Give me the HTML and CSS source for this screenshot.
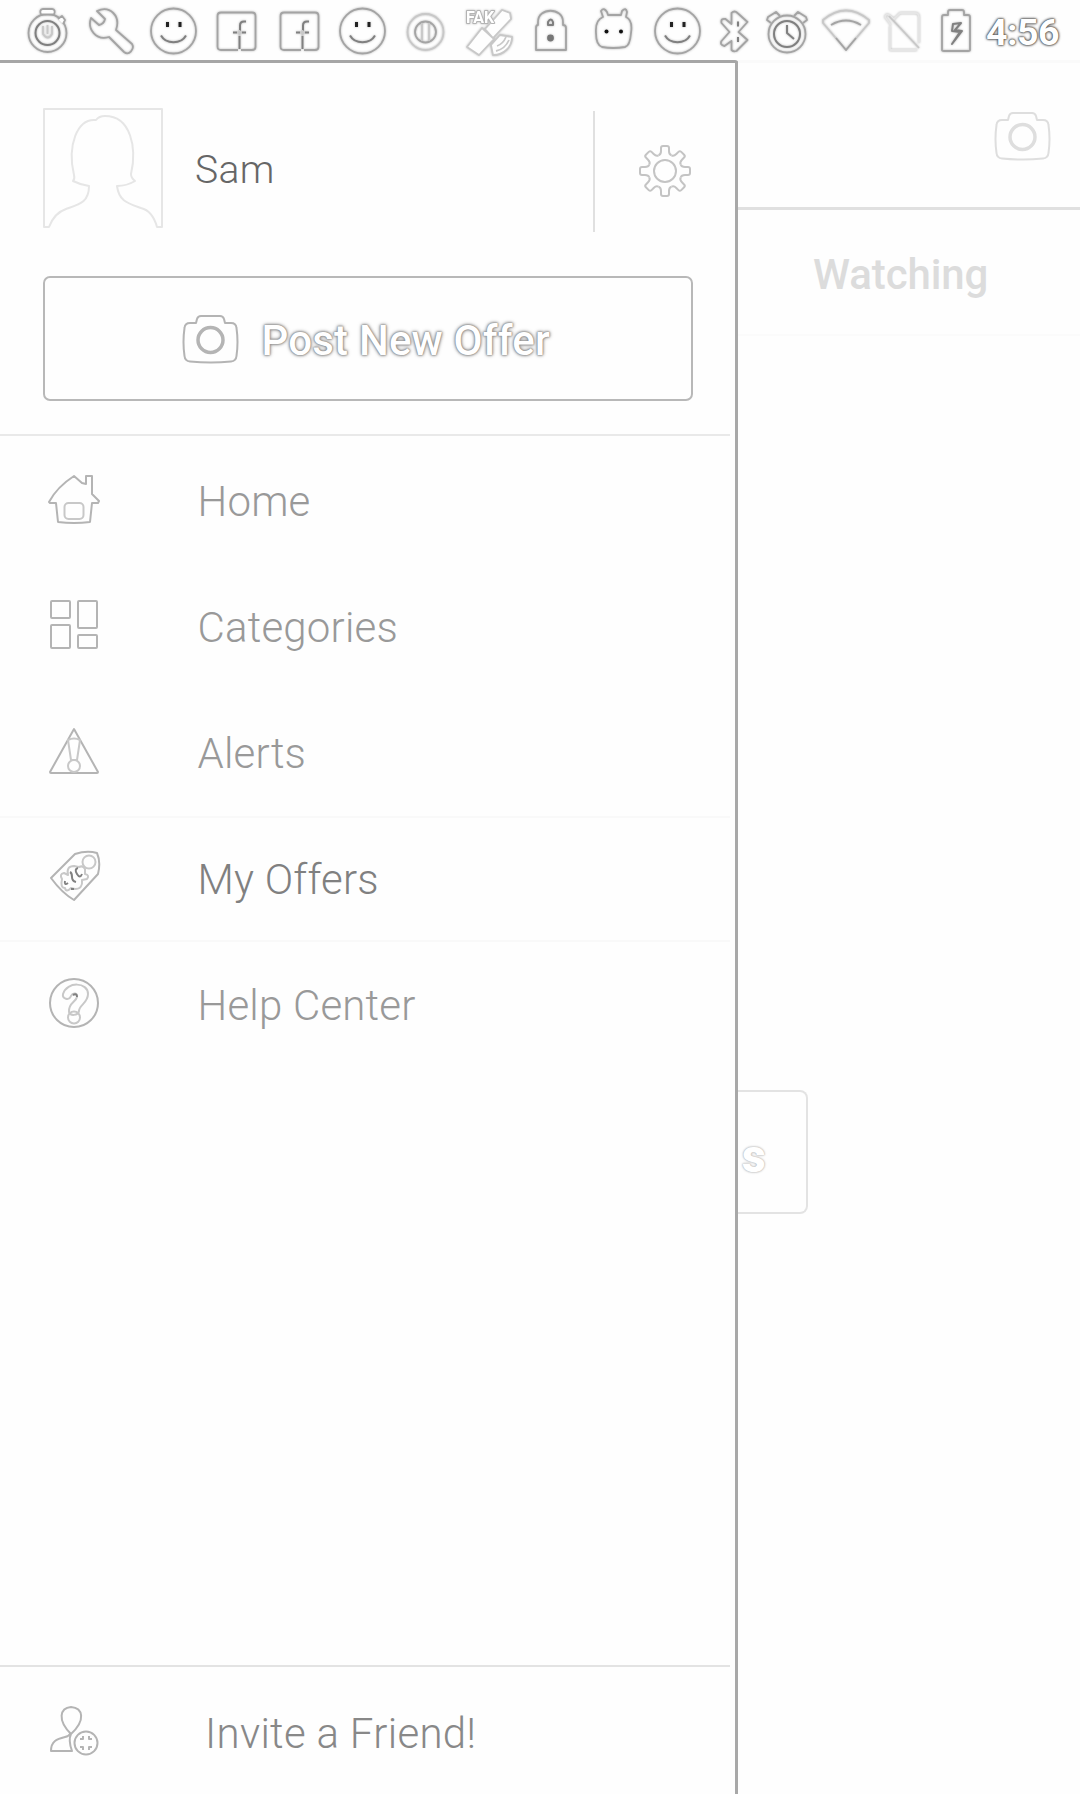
FILE: index.html
```html
<!DOCTYPE html>
<html lang="en">
<head>
<meta charset="utf-8">
<title>Offers</title>
<link rel="stylesheet" href="styles.css">
</head>
<body>
<svg class="defs" width="0" height="0">
  <symbol id="smile" viewBox="0 0 63 60">
    <circle cx="31.500" cy="31" r="22.500"/>
    <path class="dark" d="M25.500 22v5M38 22v5"/>
    <path class="mid" d="M19 35.500c5 9 20 9 25 0"/>
  </symbol>
  <symbol id="fb" viewBox="0 0 63 60">
    <path d="M33 50H16q-3.500 0-3.500-3.500V16q0-3.500 3.500-3.500h31q3.500 0 3.500 3.500v31q0 3-3.500 3H36"/>
    <path class="mid" d="M41 21.500h-2q-4 0-4 4V31M28 32.500h4M37 32.500h4M34.500 36v13"/>
    <path class="soft" d="M32 32.500h5M34.500 30v6"/>
  </symbol>
  <symbol id="camera" viewBox="0 0 57 50">
    <path d="M14 9l1-4q1-3 4-3h19q3 0 4 3l1 4h6q5 0 5.500 5 2 14 0 28-.5 5-5.500 5.500-20 2-41 0Q3 47 2.500 42q-2-14 0-28Q3 9 8 9z"/>
    <circle class="lens" cx="28.500" cy="26" r="12.500"/>
  </symbol>
  <symbol id="tooth" viewBox="-27 -27 54 54">
    <path d="M-6.500-15.700Q-4-16.500-4-20V-23q0-2 2-2h4q2 0 2 2v3q0 3.500 2.500 4.300"/>
  </symbol>
</svg>
<div class="screen">
  <header class="status">
    <svg class="cell" viewBox="0 0 63 60"><circle cx="31.500" cy="33" r="19"/><circle class="mid" cx="31.500" cy="33" r="12"/><path class="lid" d="M25 14.500q-2-5 2-5.500h9q4 .5 2 5.500zM42 19l4-3 3 4-2 4"/><path class="soft" d="M27 26v8q5 7 9 0v-8M31.500 25v9"/></svg>
    <svg class="cell" viewBox="0 0 63 60"><path d="M18 11l8 8q-1 5-6 6l-8-7c-4 11 5 23 18 19l15 15c5 4 11-3 8-8L37 30C42 16 31 5 18 11z"/></svg>
    <svg class="cell"><use href="#smile"/></svg>
    <svg class="cell"><use href="#fb"/></svg>
    <svg class="cell"><use href="#fb"/></svg>
    <svg class="cell"><use href="#smile"/></svg>
    <svg class="cell" viewBox="0 0 63 60"><circle class="soft" cx="31.500" cy="32" r="18"/><circle cx="31.500" cy="32" r="10.500"/><path class="soft" d="M28 23v18M35 23v18"/></svg>
    <svg class="cell" viewBox="0 0 63 60"><path class="paper" d="M38 18l7-8 8 3 1 6-18 19-8-9zM25 28l12 11-15 16-12-8zM43 35l12 2c0 10-8 18-19 18l-2-10z"/><path class="soft" d="M40 46q6-2 9-9M39 51q9-2 13-11"/><text class="tiny" x="9" y="23">FAK</text></svg>
    <svg class="cell" viewBox="0 0 63 60"><path d="M18 25v-3c0-15 25-15 25 0v3q3 0 3 3v22H16V28q0-3 2-3z"/><path class="mid" d="M28 25v-3q3-5 5 0v3z"/><circle class="solid" cx="30.500" cy="38" r="2.500"/></svg>
    <svg class="cell" viewBox="0 0 63 60"><path d="M20 17l-2-6q3-4 6 1l1 3h13l1-4q4-4 5 1l-1 5q7 3 5 16-1 13-6 14-12 2-23 0-6-2-6-14-1-13 7-16z"/><circle class="ink" cx="23.500" cy="31.500" r="2"/><circle class="ink" cx="38" cy="31.500" r="2"/></svg>
    <svg class="cell"><use href="#smile"/></svg>
    <svg class="bt" viewBox="0 0 53 60"><path d="M22.500 24V13q3-3 6 0l10 9-9 10 9 8-11 11q-3 1-5-1V41l-7 5q-5-1-3-5l8-9-8-9q-1-5 4-4z"/><path class="mid" d="M29 21.500v5M29 37v5"/></svg>
    <svg class="alarm" viewBox="0 0 52 60"><circle cx="25" cy="34" r="18.500"/><circle class="mid" cx="25" cy="34" r="13"/><path d="M9 23l-4-3 1-3 8-5 4 4M41 23l4-3-1-3-8-5-4 4"/><path class="mid" d="M25 25v8l7 6"/></svg>
    <svg class="wifi" viewBox="0 0 64 60"><path class="soft" d="M9 20Q32 1 55 20v3L32 50 9 23z"/><path d="M17 25q15-9 30 0M22 38l10 12 10-12"/></svg>
    <svg class="sim" viewBox="0 0 50 60"><path class="faint" d="M13 25L7 17q1-4 4-2l5 4 6-6h15q4 0 4 4v26M12 26v24h27"/><path class="soft" d="M11 16l30 32"/></svg>
    <svg class="battery" viewBox="0 0 56 60"><path d="M16 15h4v-3q0-2 2-2h12q2 0 2 2v3h4q2 0 2 2v33q0 1-2 1H16q-2 0-2-1V17q0-2 2-2z"/><path class="mid" d="M33 23l-8 1-1 7 8 1-8 12 10-13-7-1z"/></svg>
    <span class="clock">4:56</span>
  </header>
  <div class="body">
    <nav class="drawer">
      <div class="profile">
        <svg class="avatar" viewBox="0 0 120 120"><path d="M1 1h118v118h-5c-3-11-8-17-16-19-14-5-22-7-24-22 7 0 13-2 18-5q-4-3-4-7C94 40 88 8 62 8q-6 0-9 4C34 10 24 38 31 67q1 4-1 6 8 4 16 5c0 16-9 18-23 23-9 3-14 10-17 18H1z"/></svg>
        <span class="name">Sam</span>
        <span class="rule"></span>
        <svg class="gear" viewBox="-27 -27 54 54">
          <circle r="11"/>
          <use href="#tooth" x="-27" y="-27" width="54" height="54"/>
          <use href="#tooth" x="-27" y="-27" width="54" height="54" transform="rotate(45)"/>
          <use href="#tooth" x="-27" y="-27" width="54" height="54" transform="rotate(90)"/>
          <use href="#tooth" x="-27" y="-27" width="54" height="54" transform="rotate(135)"/>
          <use href="#tooth" x="-27" y="-27" width="54" height="54" transform="rotate(180)"/>
          <use href="#tooth" x="-27" y="-27" width="54" height="54" transform="rotate(225)"/>
          <use href="#tooth" x="-27" y="-27" width="54" height="54" transform="rotate(270)"/>
          <use href="#tooth" x="-27" y="-27" width="54" height="54" transform="rotate(315)"/>
        </svg>
      </div>
      <button class="post"><svg class="cam" viewBox="0 0 57 50"><use href="#camera"/></svg><span>Post New Offer</span></button>
      <ul class="menu">
        <li><svg viewBox="0 0 54 54"><path d="M2 30Q10 15 27 4l8 7 4 1V4h6v18l7 7-1 2h-6l-2 19q-16 2-32 0L9 31H3z"/><rect class="soft" x="17.500" y="31" width="19" height="16" rx="4"/></svg><span>Home</span></li>
        <li><svg viewBox="0 0 54 54"><rect x="4" y="3" width="19" height="17" rx="1"/><rect x="31" y="3" width="19" height="27" rx="1"/><rect x="4" y="27" width="19" height="23" rx="1"/><rect x="31" y="37" width="19" height="13" rx="1"/></svg><span>Categories</span></li>
        <li><svg viewBox="0 0 54 54"><path d="M27 5l24 43q0 1-1 1H4q-1 0-1-1z"/><path class="soft" d="M21 16q6-3 12 0l-3 20h-6z"/><circle class="soft" cx="27" cy="42" r="6"/></svg><span>Alerts</span></li>
        <li class="active"><svg viewBox="0 0 54 54"><path d="M4 28L28 4q12-4 22-1 4 9 1 21L27 50Q15 43 4 28z"/><circle class="soft" cx="42" cy="12" r="6.500"/><path class="soft" d="M15 29q-3-5 2-6l4 2q-2-9 6-9l5 1q4-2 6 2v5q5 1 2 5l-5 1q1 9-7 9l-4-1q-5 5-6 0-5 0-3-9z"/><path class="mid" d="M23 22q2 1 2 5t4 5M31 18q-4 1-1 6t5 0M18 31q-1 5 3 2M24 39h3"/></svg><span>My Offers</span></li>
        <li><svg viewBox="0 0 54 54"><circle cx="27" cy="27" r="24"/><path class="soft" d="M22 36c-1-9 7-10 8-15 1-4-4-5-6-1-2 5-9 3-8-2C20 5 41 6 41 18c0 9-9 11-9 17-1 5-9 5-10 1z"/><path class="mid" d="M26 19q4-2 4 2"/><circle class="soft" cx="27" cy="41.500" r="6"/></svg><span>Help Center</span></li>
      </ul>
      <div class="invite"><svg viewBox="0 0 54 54"><path d="M24 29C10 15 13 3 24 2c12 1 15 13 0 27q-3 6 1 17H4c0-10 6-12 14-14q4-1 5-3"/><circle cx="39" cy="38" r="11.500"/><path d="M33 34h3v-3M42 31v3h3M33 42h3v3M42 45v-3h3"/></svg><span>Invite a Friend!</span></div>
    </nav>
    <main class="page">
      <div class="appbar"><svg class="cam" viewBox="0 0 57 50"><use href="#camera"/></svg></div>
      <div class="tab">Watching</div>
      <div class="peek"><span>s</span></div>
    </main>
  </div>
</div>
</body>
</html>
```

FILE: styles.css
```css
* { box-sizing: border-box; }
body {
  margin: 0;
  background: #fefefe;
  font-family: Roboto, sans-serif;
}
.defs { position: absolute; }
svg {
  display: block;
  flex: none;
  fill: none;
  stroke: #b4b4b4;
  stroke-width: 2;
  stroke-linejoin: round;
}
.screen {
  display: flex;
  flex-direction: column;
  width: 1080px;
  height: 1794px;
  overflow: hidden;
}

.status {
  display: flex;
  height: 60px;
  padding-left: 16px;
}
.status svg {
  height: 60px;
  stroke: #a4a4a4;
  stroke-width: 1.8;
  filter: drop-shadow(0 0 1px #b8b8b8);
}
.cell { width: 63px; }
.bt { width: 53px; }
.alarm { width: 52px; }
.wifi { width: 64px; }
.sim { width: 50px; }
.battery { width: 56px; }
.dark { stroke: #222; stroke-width: 3; }
.mid { stroke: #808080; stroke-width: 2; }
.lid, .paper { fill: #fefefe; }
.soft, .paper { stroke: #c8c8c8; }
.faint { stroke: #e6e6e6; }
.solid { fill: #777; stroke: #777; }
.ink { fill: #111; stroke: none; }
.tiny {
  fill: #fff;
  stroke: #b4b4b4;
  stroke-width: 2;
  paint-order: stroke;
  font: bold 16px Roboto, sans-serif;
}
.clock {
  margin-left: 2px;
  color: #fff;
  font-size: 37.5px;
  font-weight: 700;
  line-height: 65px;
  letter-spacing: -0.5px;
  text-shadow: 0 0 1px #555, 0 0 2px #555, 0 0 3px #666, 0 0 3px #777;
}

.body { display: flex; flex: 1; }
.drawer {
  display: flex;
  flex-direction: column;
  width: 738px;
  border-top: 3px solid #a6a6a6;
  border-right: 3px solid #a8a8a8;
  border-top-right-radius: 3px;
}
.profile {
  display: flex;
  height: 213px;
  padding: 45px 0 0 43px;
}
.avatar { width: 120px; height: 120px; stroke: #e6e6e6; }
.name {
  width: 397px;
  padding-left: 32px;
  color: #666;
  font-size: 39px;
  font-weight: 300;
  letter-spacing: 0.3px;
  line-height: 125px;
}
.rule {
  width: 2px;
  height: 121px;
  margin: 3px 0 0 33px;
  background: #e0e0e0;
}
.gear { width: 54px; height: 54px; margin: 36px 0 0 43px; stroke: #c4c4c4; }
.post {
  display: flex;
  align-items: center;
  width: 650px;
  height: 125px;
  margin: 0 0 0 42.5px;
  padding: 0 0 0 137px;
  border: 2.5px solid #b8b8b8;
  border-radius: 7px;
  background: #fefefe;
  color: #fff;
  font: 500 42px Roboto, sans-serif;
  letter-spacing: 0.2px;
  text-shadow: 0 0 1px #888, 0 0 2px #888, 0 0 3px #999, 0 0 4px #999;
}
.post span { margin: 3px 0 0 23px; white-space: nowrap; }
.cam { width: 57px; height: 50px; }
.lens { stroke-width: 3.5; }
.menu {
  width: 730px;
  margin: 33px 0 0;
  padding: 2px 0 0;
  border-top: 2px solid #e9e9e9;
  list-style: none;
}
.menu li, .invite {
  display: flex;
  align-items: center;
  height: 126px;
  padding-left: 47px;
  color: #999;
  font-size: 42px;
  font-weight: 300;
  letter-spacing: 0.2px;
}
.menu svg, .invite svg { width: 54px; height: 54px; margin-top: -4px; }
.menu span { margin: 1px 0 0 96.5px; }
.menu .active {
  border-top: 2px solid #f9f9f9;
  border-bottom: 2px solid #f9f9f9;
  color: #808080;
}
.invite {
  width: 730px;
  height: 129px;
  margin-top: auto;
  border-top: 2px solid #e3e3e3;
  color: #888;
  letter-spacing: 0.3px;
}
.invite svg { margin-top: 2px; }
.invite span { margin: 6px 0 0 104px; }

.page { flex: 1; }
.appbar {
  display: flex;
  justify-content: flex-end;
  height: 150px;
  padding: 48px 29px 0 0;
  border-top: 3px solid #fafafa;
  border-bottom: 3px solid #e0e0e0;
}
.appbar svg { stroke: #dedede; }
.tab {
  height: 126px;
  padding-left: 75px;
  border-bottom: 2px solid #fbfbfb;
  color: #dcdcdc;
  font-size: 42px;
  font-weight: 500;
  letter-spacing: -0.1px;
  line-height: 130px;
}
.peek {
  width: 70px;
  height: 124px;
  margin-top: 754px;
  border: 2px solid #e3e3e3;
  border-left: 0;
  border-radius: 0 8px 8px 0;
  color: #fff;
  font-size: 46px;
  font-weight: 900;
  line-height: 128px;
  text-shadow: 0 0 1px #bbb, 0 0 2px #bbb, 0 0 3px #ccc;
}
.peek span { margin-left: 4px; }
```
